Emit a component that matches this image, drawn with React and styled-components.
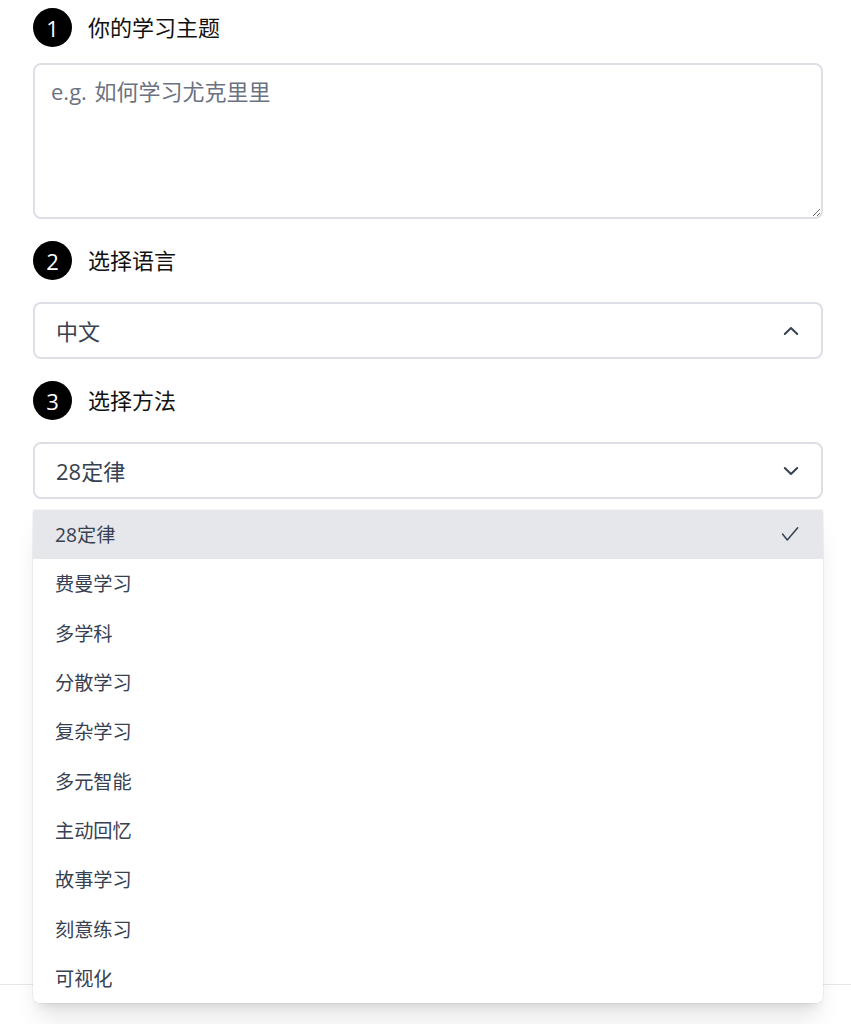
import React from 'react';
import styled, { createGlobalStyle } from 'styled-components';

const FONT = `"Open Sans", "Noto Sans CJK SC", sans-serif`;

const METHODS = ['28定律', '费曼学习', '多学科', '分散学习', '复杂学习', '多元智能', '主动回忆', '故事学习', '刻意练习', '可视化'];

const Chevron = ({ up }) => (
    <svg width="20" height="20" viewBox="0 0 20 20" fill="none" stroke="#374151" strokeWidth="2" strokeLinecap="round" strokeLinejoin="round">
        <path d={up ? 'M3.8 13 10 7l6.2 6' : 'M3.8 7 10 13l6.2-6'} />
    </svg>
);

const Check = () => (
    <svg width="20" height="20" viewBox="0 0 20 20" fill="none" stroke="#374151" strokeWidth="1.5" strokeLinecap="round" strokeLinejoin="round">
        <path d="M2.5 10 7.3 16 17.7 3.8" />
    </svg>
);

const Step = ({ number, $gap, children }) => (
    <StepRow $gap={$gap}>
        <StepNumber>{number}</StepNumber>
        <StepTitle>{children}</StepTitle>
    </StepRow>
);

const App = () => {
    return (
        <React.Fragment>
            <GlobalStyle />
            <Page>
                <Form>
                    <Step number="1" $gap={16}>你的学习主题</Step>
                    <Topic placeholder="e.g. 如何学习尤克里里" />
                    <Step number="2" $gap={22}>选择语言</Step>
                    <SelectButton type="button">
                        中文
                        <Chevron up />
                    </SelectButton>
                    <Step number="3" $gap={22}>选择方法</Step>
                    <SelectWrap>
                        <SelectButton type="button">
                            28定律
                            <Chevron />
                        </SelectButton>
                        <Options>
                            {METHODS.map((method, i) => (
                                <Option key={method} $selected={i === 0}>
                                    {method}
                                    {i === 0 && <Check />}
                                </Option>
                            ))}
                        </Options>
                    </SelectWrap>
                </Form>
                <Footer />
            </Page>
        </React.Fragment>
    );
};

export default App;

const GlobalStyle = createGlobalStyle`
html, body {
    margin: 0;
    padding: 0;
    background: #fff;
    overflow: hidden;
}
* {
    box-sizing: border-box;
}
`;

const Page = styled.div`
height: 1024px;
display: flex;
flex-direction: column;
justify-content: space-between;
font-family: ${FONT};
`;

const Form = styled.div`
display: flex;
flex-direction: column;
padding: 8px 28px 0 33px;
`;

const Footer = styled.div`
height: 40px;
border-top: 1px solid #e5e7eb;
`;

const StepRow = styled.div`
display: flex;
align-items: center;
gap: 16px;
height: 39px;
margin-bottom: ${(props) => props.$gap}px;
margin-top: 22px;
&:first-child {
    margin-top: 0;
}
`;

const StepNumber = styled.div`
width: 39px;
height: 39px;
border-radius: 50%;
background: #000;
color: #fff;
display: flex;
align-items: center;
justify-content: center;
font-size: 22px;
line-height: 1;
`;

const StepTitle = styled.div`
font-size: 22px;
color: #111;
line-height: 28px;
padding-bottom: 2px;
`;

const Topic = styled.textarea`
display: block;
width: 100%;
height: 156px;
padding: 10px 16px;
border: 2px solid #dcdfe5;
border-radius: 8px;
font-family: ${FONT};
font-size: 22px;
line-height: 33px;
word-spacing: 2px;
color: #374151;
outline: none;
&::placeholder {
    color: #6b7280;
    opacity: 1;
}
`;

const SelectWrap = styled.div`
position: relative;
`;

const SelectButton = styled.button`
display: flex;
align-items: center;
justify-content: space-between;
width: 100%;
height: 57px;
padding: 0 20px 2px 21px;
background: #fff;
border: 2px solid #dcdfe5;
border-radius: 8px;
font-family: ${FONT};
font-size: 22px;
color: #374151;
svg {
    margin-top: 2px;
}
`;

const Options = styled.ul`
position: absolute;
top: 68px;
left: 0;
right: 0;
margin: 0;
padding: 0;
list-style: none;
background: #fff;
border-radius: 2px 2px 8px 8px;
overflow: hidden;
box-shadow: 0 20px 25px -5px rgba(0, 0, 0, 0.1), 0 8px 10px -6px rgba(0, 0, 0, 0.1), 0 0 0 1px rgba(0, 0, 0, 0.04);
`;

const Option = styled.li`
display: flex;
align-items: center;
justify-content: space-between;
height: 49.3px;
padding: 0 23px 1px 22px;
font-size: 19.2px;
color: #374151;
background: ${(props) => (props.$selected ? '#e5e7eb' : '#fff')};
`;
